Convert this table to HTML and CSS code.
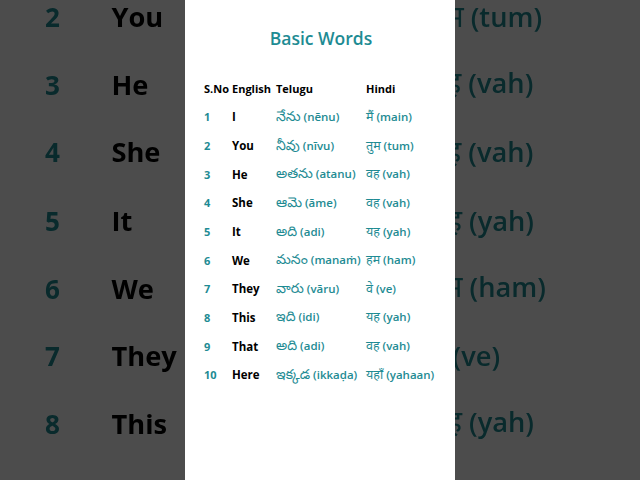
FILE: index.html
```html
<!DOCTYPE html>
<html lang="en">
<head>
<meta charset="utf-8">
<title>Basic Words</title>
<link rel="stylesheet" href="styles.css">
</head>
<body>
<div class="backdrop" aria-hidden="true">
  <div class="stage">
    <section class="card">
      <h1 class="title">Basic Words</h1>
      <div class="words">
        <span class="head">S.No</span><span class="head">English</span><span class="head">Telugu</span><span class="head">Hindi</span>
        <span class="num">1</span><span class="eng">I</span><span class="nat"><span class="te">నేను</span> (nēnu)</span><span class="nat"><span class="hi">मैं</span> (main)</span>
        <span class="num">2</span><span class="eng">You</span><span class="nat"><span class="te">నీవు</span> (nīvu)</span><span class="nat"><span class="hi">तुम</span> (tum)</span>
        <span class="num">3</span><span class="eng">He</span><span class="nat"><span class="te">అతను</span> (atanu)</span><span class="nat"><span class="hi">वह</span> (vah)</span>
        <span class="num">4</span><span class="eng">She</span><span class="nat"><span class="te">ఆమె</span> (āme)</span><span class="nat"><span class="hi">वह</span> (vah)</span>
        <span class="num">5</span><span class="eng">It</span><span class="nat"><span class="te">అది</span> (adi)</span><span class="nat"><span class="hi">यह</span> (yah)</span>
        <span class="num">6</span><span class="eng">We</span><span class="nat"><span class="te">మనం</span> (manaṁ)</span><span class="nat"><span class="hi">हम</span> (ham)</span>
        <span class="num">7</span><span class="eng">They</span><span class="nat"><span class="te">వారు</span> (vāru)</span><span class="nat"><span class="hi">वे</span> (ve)</span>
        <span class="num">8</span><span class="eng">This</span><span class="nat"><span class="te">ఇది</span> (idi)</span><span class="nat"><span class="hi">यह</span> (yah)</span>
        <span class="num">9</span><span class="eng">That</span><span class="nat"><span class="te">అది</span> (adi)</span><span class="nat"><span class="hi">वह</span> (vah)</span>
        <span class="num">10</span><span class="eng">Here</span><span class="nat"><span class="te">ఇక్కడ</span> (ikkaḍa)</span><span class="nat"><span class="hi">यहाँ</span> (yahaan)</span>
      </div>
    </section>
  </div>
</div>
<div class="stage front">
  <section class="card">
    <h1 class="title">Basic Words</h1>
    <div class="words">
      <span class="head">S.No</span><span class="head">English</span><span class="head">Telugu</span><span class="head">Hindi</span>
      <span class="num">1</span><span class="eng">I</span><span class="nat"><span class="te">నేను</span> (nēnu)</span><span class="nat"><span class="hi">मैं</span> (main)</span>
      <span class="num">2</span><span class="eng">You</span><span class="nat"><span class="te">నీవు</span> (nīvu)</span><span class="nat"><span class="hi">तुम</span> (tum)</span>
      <span class="num">3</span><span class="eng">He</span><span class="nat"><span class="te">అతను</span> (atanu)</span><span class="nat"><span class="hi">वह</span> (vah)</span>
      <span class="num">4</span><span class="eng">She</span><span class="nat"><span class="te">ఆమె</span> (āme)</span><span class="nat"><span class="hi">वह</span> (vah)</span>
      <span class="num">5</span><span class="eng">It</span><span class="nat"><span class="te">అది</span> (adi)</span><span class="nat"><span class="hi">यह</span> (yah)</span>
      <span class="num">6</span><span class="eng">We</span><span class="nat"><span class="te">మనం</span> (manaṁ)</span><span class="nat"><span class="hi">हम</span> (ham)</span>
      <span class="num">7</span><span class="eng">They</span><span class="nat"><span class="te">వారు</span> (vāru)</span><span class="nat"><span class="hi">वे</span> (ve)</span>
      <span class="num">8</span><span class="eng">This</span><span class="nat"><span class="te">ఇది</span> (idi)</span><span class="nat"><span class="hi">यह</span> (yah)</span>
      <span class="num">9</span><span class="eng">That</span><span class="nat"><span class="te">అది</span> (adi)</span><span class="nat"><span class="hi">वह</span> (vah)</span>
      <span class="num">10</span><span class="eng">Here</span><span class="nat"><span class="te">ఇక్కడ</span> (ikkaḍa)</span><span class="nat"><span class="hi">यहाँ</span> (yahaan)</span>
    </div>
  </section>
</div>
</body>
</html>
```
FILE: styles.css
```css
html, body {
  margin: 0;
  padding: 0;
  width: 640px;
  height: 480px;
  overflow: hidden;
  background: #4d4d4d;
  font-family: "Open Sans", "Noto Sans Telugu", "Noto Sans Devanagari", "Noto Sans", sans-serif;
}

.stage {
  width: 640px;
  height: 480px;
  display: flex;
  justify-content: center;
}

.front {
  position: relative;
  z-index: 1;
}

.backdrop {
  position: absolute;
  left: 0;
  top: 0;
  width: 640px;
  height: 480px;
  transform: scale(2.37);
  transform-origin: 320px 240px;
  filter: brightness(0.3);
}

.card {
  width: 270px;
  height: 480px;
  box-sizing: border-box;
  background: #ffffff;
  padding: 26px 0 0 19px;
}

.title {
  margin: 0 0 24px 0;
  padding-left: 2px;
  padding-right: 19px;
  text-align: center;
  font-size: 17.5px;
  line-height: 24px;
  font-weight: 600;
  color: #1e8b93;
}

.words {
  display: grid;
  grid-template-columns: 28px 44px 90px auto;
  grid-auto-rows: 28.65px;
  align-items: center;
  font-size: 11px;
  font-weight: 700;
  white-space: nowrap;
}

.head {
  color: #000000;
}

.num {
  color: #1e8b93;
}

.eng {
  color: #000000;
  font-size: 11.5px;
}

.nat {
  color: #1e8b93;
  font-weight: 600;
  font-size: 11.5px;
}

.te {
  font-weight: 400;
  font-size: 14px;
}

.hi {
  font-weight: 400;
  font-size: 12.5px;
}
```
